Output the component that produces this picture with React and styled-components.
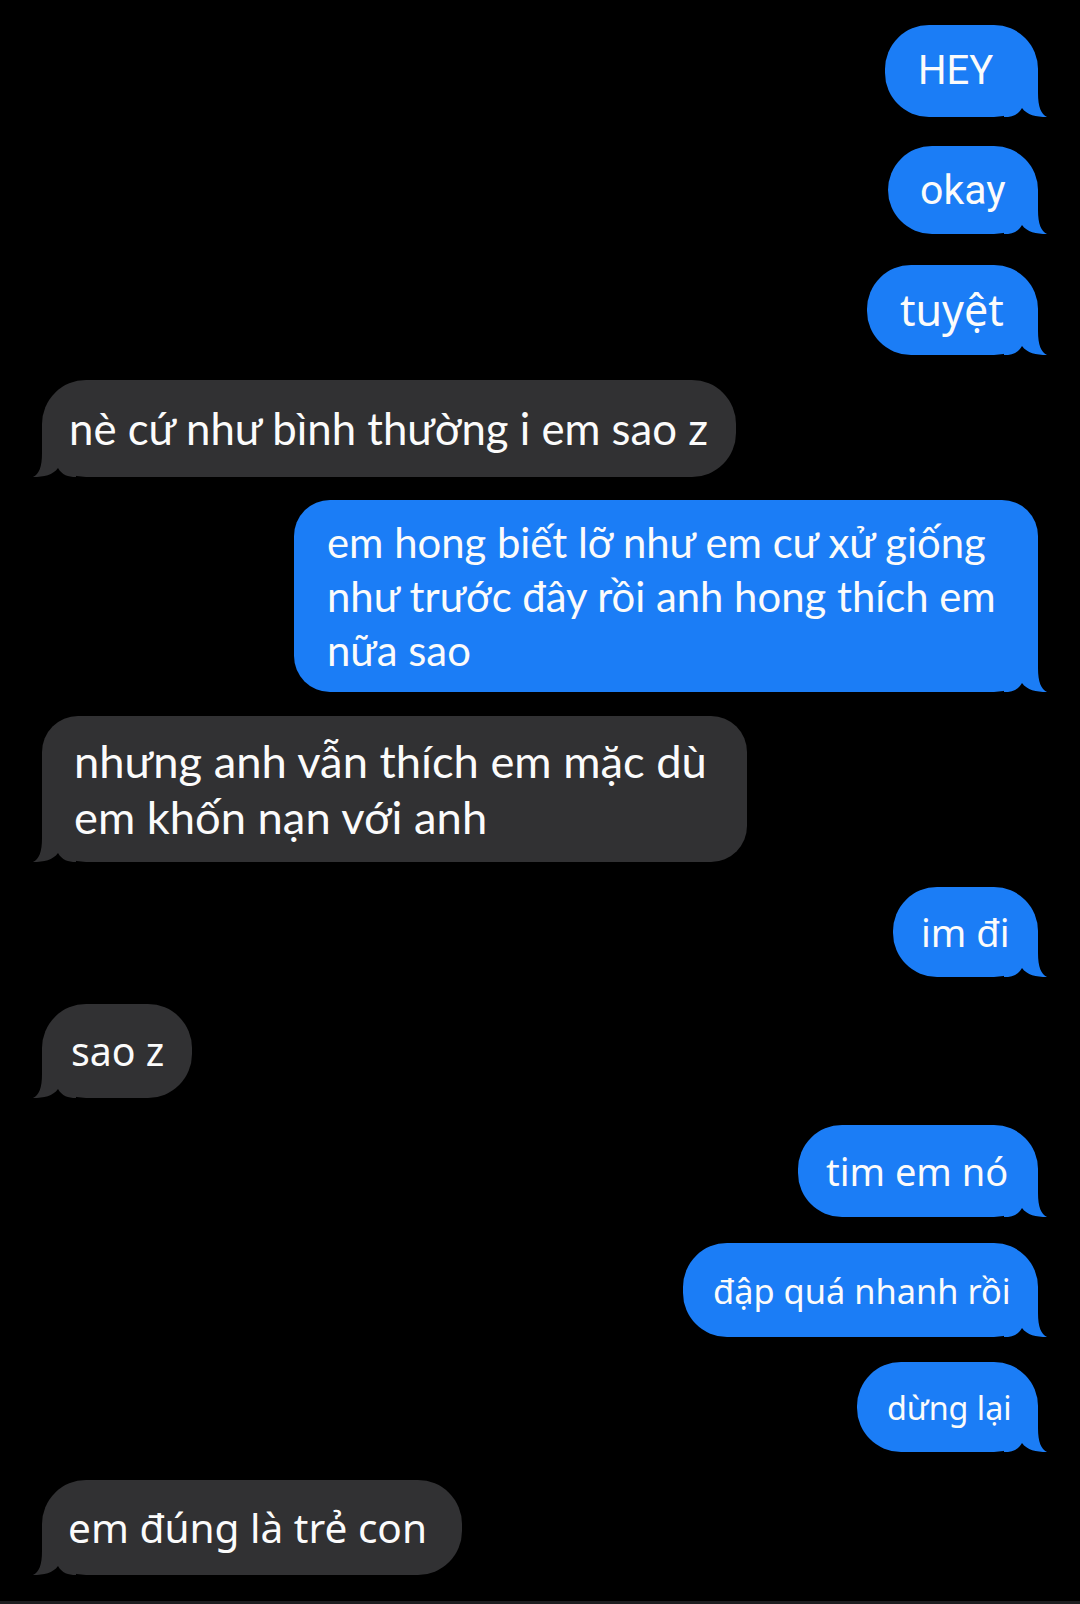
import React from "react";
import styled, { createGlobalStyle } from "styled-components";

const GlobalStyle = createGlobalStyle`
  html, body {
    margin: 0;
    padding: 0;
    background: #000;
  }
`;

const BLUE = "#1b7df6";
const GRAY = "#313133";

const Page = styled.div`
  width: 1080px;
  height: 1604px;
  background: #000;
  display: flex;
  flex-direction: column;
  overflow: hidden;
`;

const Thread = styled.div`
  flex-grow: 1;
  display: flex;
  flex-direction: column;
`;

const Row = styled.div`
  display: flex;
  justify-content: ${(p) => (p.$mine ? "flex-end" : "flex-start")};
  margin-top: ${(p) => p.$gap}px;
  padding: ${(p) => (p.$mine ? "0 42px 0 0" : "0 0 0 42px")};
`;

const Bubble = styled.div`
  position: relative;
  box-sizing: border-box;
  width: ${(p) => p.$w}px;
  height: ${(p) => p.$h}px;
  padding-left: ${(p) => p.$pad}px;
  border-radius: ${(p) => p.$r}px;
  ${(p) =>
    p.$mine
      ? "border-bottom-right-radius: 44px;"
      : "border-bottom-left-radius: 44px;"}
  background: ${(p) => (p.$mine ? BLUE : GRAY)};
  color: #fbfbfb;
  display: flex;
  flex-direction: column;
  justify-content: center;
  font-family: ${(p) => p.$font};
  font-size: ${(p) => p.$size}px;
  line-height: ${(p) => p.$lh}px;
  white-space: nowrap;
`;

const Line = styled.span`
  position: relative;
  z-index: 1;
  display: block;
`;

const Tail = styled.svg`
  position: absolute;
  bottom: 0;
  z-index: 0;
  width: 44px;
  height: 44px;
  ${(p) => (p.$mine ? "right: -10px;" : "left: -10px; transform: scaleX(-1);")}
`;

const Footer = styled.div`
  height: 3px;
  background: #1e1e20;
`;

const SANS = `"Noto Sans", "Open Sans", sans-serif`;
const NARROW = `Lato, "Noto Sans", sans-serif`;
const HELV = `Roboto, "Liberation Sans", sans-serif`;

const messages = [
  { mine: true, gap: 25, lines: ["HEY"], w: 153, h: 92, pad: 33, font: HELV, size: 40 },
  { mine: true, gap: 29, lines: ["okay"], w: 150, h: 88, pad: 32, font: HELV, size: 41 },
  { mine: true, gap: 31, lines: ["tuyệt"], w: 171, h: 90, pad: 33, font: SANS, size: 43 },
  { mine: false, gap: 25, lines: ["nè cứ như bình thường i em sao z"], w: 694, h: 97, pad: 27, font: NARROW, size: 43.7 },
  { mine: true, gap: 23, lines: ["em hong biết lỡ như em cư xử giống", "như trước đây rồi anh hong thích em", "nữa sao"], w: 744, h: 192, pad: 33, font: NARROW, size: 41.8, lh: 54, r: 36 },
  { mine: false, gap: 24, lines: ["nhưng anh vẫn thích em mặc dù", "em khốn nạn với anh"], w: 705, h: 146, pad: 32, font: NARROW, size: 45.3, lh: 56, r: 36 },
  { mine: true, gap: 25, lines: ["im đi"], w: 145, h: 90, pad: 28, font: SANS, size: 38 },
  { mine: false, gap: 27, lines: ["sao z"], w: 150, h: 94, pad: 29, font: SANS, size: 39.3 },
  { mine: true, gap: 27, lines: ["tim em nó"], w: 240, h: 92, pad: 28, font: SANS, size: 38 },
  { mine: true, gap: 26, lines: ["đập quá nhanh rồi"], w: 355, h: 94, pad: 30, font: SANS, size: 34.4 },
  { mine: true, gap: 25, lines: ["dừng lại"], w: 181, h: 90, pad: 30, font: SANS, size: 32.3 },
  { mine: false, gap: 28, lines: ["em đúng là trẻ con"], w: 420, h: 95, pad: 26, font: SANS, size: 40.6 },
];

const TailShape = ({ mine }) => (
  <Tail $mine={mine} viewBox="0 0 44 44">
    <path
      d="M0 44 C8 44 14 42 18 35 C23 42 32 44 43 44 C37 41 34 34 34 20 L34 0 L0 0 Z"
      fill={mine ? BLUE : GRAY}
    />
  </Tail>
);

const App = () => (
  <Page>
    <GlobalStyle />
    <Thread>
      {messages.map((m, i) => (
        <Row key={i} $mine={m.mine} $gap={m.gap}>
          <Bubble
            $mine={m.mine}
            $w={m.w}
            $h={m.h}
            $pad={m.pad}
            $r={m.r || 44}
            $font={m.font}
            $size={m.size}
            $lh={m.lh || Math.round(m.size * 1.3)}
          >
            <TailShape mine={m.mine} />
            {m.lines.map((l, k) => (
              <Line key={k}>{l}</Line>
            ))}
          </Bubble>
        </Row>
      ))}
    </Thread>
    <Footer />
  </Page>
);

export default App;
